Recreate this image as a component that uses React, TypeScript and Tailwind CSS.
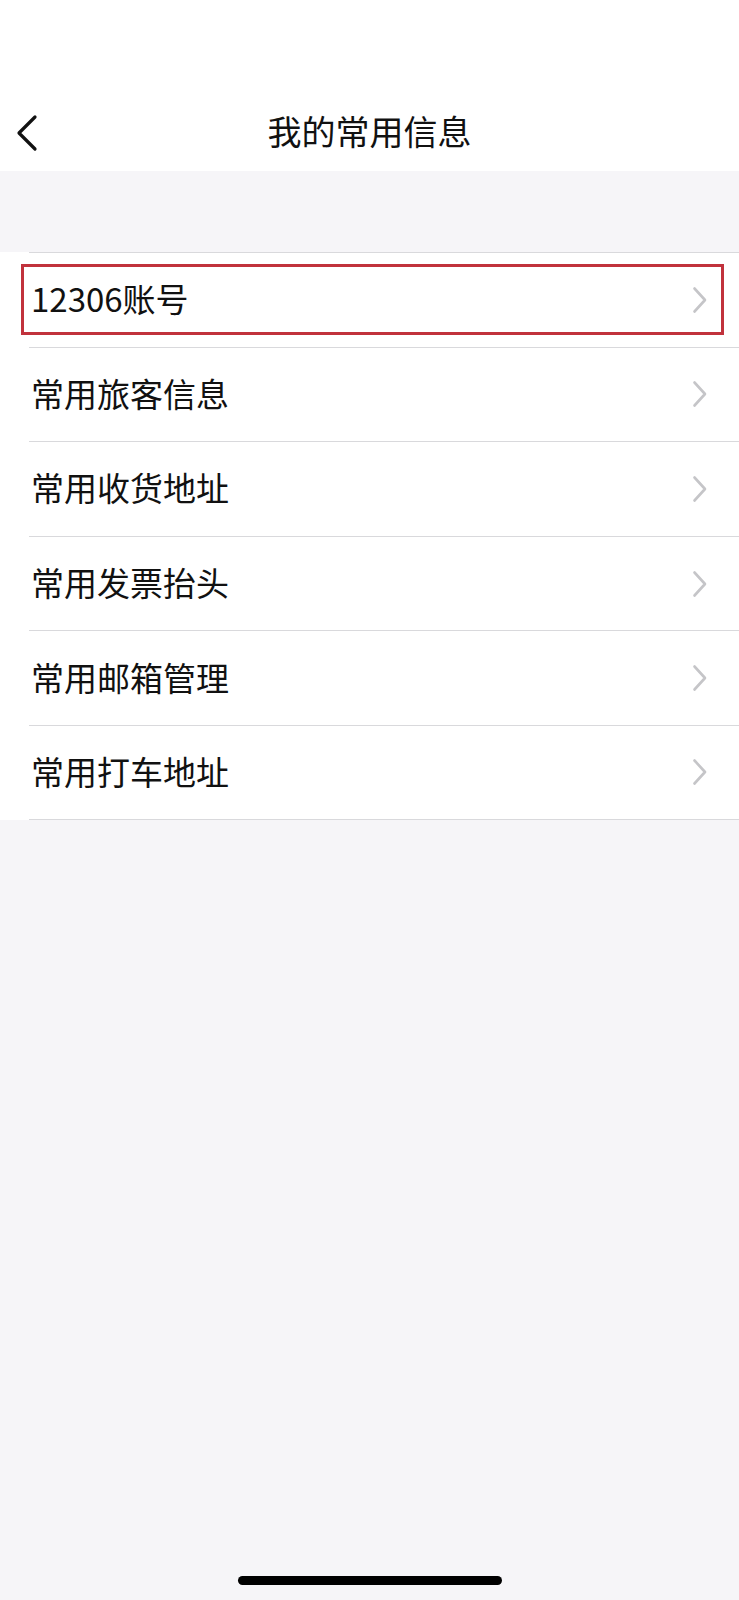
import React from "react";

const items = ["12306账号", "常用旅客信息", "常用收货地址", "常用发票抬头", "常用邮箱管理", "常用打车地址"];

function Chevron() {
  return (
    <svg width="16" height="28" viewBox="0 0 16 28" fill="none">
      <path d="M2.5 2.5 L13 14 L2.5 25.5" stroke="#c5c5c8" strokeWidth="2.6" strokeLinecap="round" strokeLinejoin="round" />
    </svg>
  );
}

export default function App() {
  return (
    <div
      className="min-h-[1600px] w-full flex flex-col bg-[#f6f5f8] text-[#111111]"
      style={{ fontFamily: '"Noto Sans CJK SC", "Noto Sans", sans-serif' }}
    >
      <div className="h-[171px] bg-white relative">
        <div className="absolute left-[15px] top-[114px]">
          <svg width="24" height="38" viewBox="0 0 24 38" fill="none">
            <path d="M20 3 L4 19 L20 35" stroke="#111" strokeWidth="3.2" strokeLinecap="round" strokeLinejoin="round" />
          </svg>
        </div>
        <div className="pt-[111px] text-center text-[34px] leading-[40px]">我的常用信息</div>
      </div>
      <div className="h-[81px]" />
      <div className="bg-white">
        {items.map((t, i) => (
          <div key={t} className="pl-[29px] relative">
            <div
              className={
                "h-[94.6px] border-t border-[#d9d9dc] flex items-center justify-between pl-[2px] pr-[31px]" +
                (i === items.length - 1 ? " border-b" : "")
              }
            >
              <span className="text-[33px] leading-[40px] -mt-[3px]">{t}</span>
              <Chevron />
            </div>
            {i === 0 && (
              <div className="absolute left-[21px] right-[15px] top-[12px] h-[71px] border-[3px] border-[#c1323c]" />
            )}
          </div>
        ))}
      </div>
      <div className="flex-1" />
      <div className="flex justify-center pb-[15px]">
        <div className="w-[264px] h-[9px] rounded-full bg-black" />
      </div>
    </div>
  );
}
